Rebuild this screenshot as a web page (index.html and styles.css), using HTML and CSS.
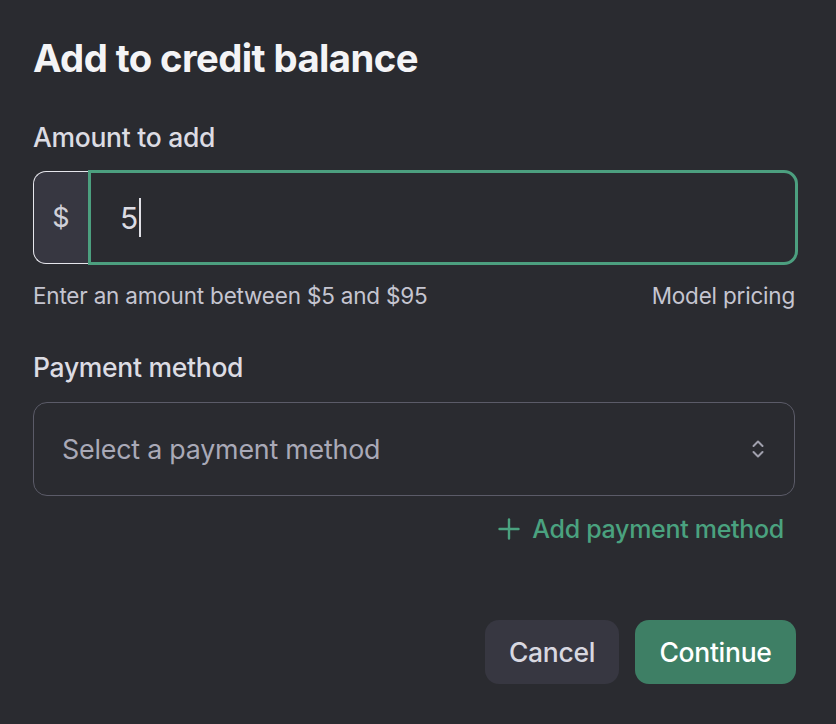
FILE: index.html
```html
<!DOCTYPE html>
<html>
<head>
<meta charset="utf-8">
<link rel="stylesheet" href="styles.css">
</head>
<body>
<div class="dialog">
  <h1 class="title">Add to credit balance</h1>
  <div class="label">Amount to add</div>
  <div class="amount-group">
    <div class="prefix">$</div>
    <div class="amount-input"><span class="value">5</span><span class="caret"></span></div>
  </div>
  <div class="helper-row">
    <span>Enter an amount between $5 and $95</span>
    <span>Model pricing</span>
  </div>
  <div class="label label-payment">Payment method</div>
  <div class="select">
    <span class="placeholder">Select a payment method</span>
    <svg class="chevrons" width="14" height="20" viewBox="0 0 14 20" fill="none" stroke="currentColor" stroke-width="2" stroke-linecap="round" stroke-linejoin="round">
      <path d="M2.5 7 L7 2.5 L11.5 7"/>
      <path d="M2.5 13 L7 17.5 L11.5 13"/>
    </svg>
  </div>
  <div class="add-row">
    <span class="add-link">
      <svg class="plus" width="22" height="22" viewBox="0 0 22 22" fill="none" stroke="currentColor" stroke-width="2.4" stroke-linecap="round">
        <path d="M11 1.5 V20.5"/>
        <path d="M1.5 11 H20.5"/>
      </svg>
      Add payment method
    </span>
  </div>
  <div class="actions">
    <button class="btn btn-cancel">Cancel</button>
    <button class="btn btn-continue">Continue</button>
  </div>
</div>
</body>
</html>
```
FILE: styles.css
```css
html, body {
  margin: 0;
  padding: 0;
  background: #2a2b30;
}
body {
  font-family: Inter, "Noto Sans", sans-serif;
  color: #ececf1;
  width: 836px;
  height: 724px;
  overflow: hidden;
}
.dialog {
  padding: 35px 38px 0 33px;
}
.title {
  margin: 0;
  font-size: 38.3px;
  line-height: 46px;
  font-weight: 700;
  letter-spacing: -0.6px;
  color: #f4f4f6;
}
.label {
  margin-top: 40px;
  font-size: 26.5px;
  line-height: 32px;
  font-weight: 500;
  letter-spacing: -0.3px;
  color: #dcdce3;
}
.label-payment {
  margin-top: 41px;
}
.amount-group {
  margin-top: 17px;
  display: flex;
  height: 95px;
}
.prefix {
  width: 55px;
  box-sizing: border-box;
  margin: 1px 0;
  border: 1.5px solid #e6e6ec;
  border-right: none;
  border-radius: 13px 0 0 13px;
  background: #373741;
  display: flex;
  align-items: center;
  justify-content: center;
  font-size: 27px;
  color: #d0d0d8;
}
.amount-input {
  flex: 1;
  box-sizing: border-box;
  border: 3.5px solid #4c9f7f;
  border-radius: 0 14px 14px 0;
  display: flex;
  align-items: center;
  padding-left: 29px;
}
.value {
  font-size: 30px;
  color: #dcdce3;
}
.caret {
  display: inline-block;
  width: 2px;
  height: 39px;
  background: #e0e0e6;
  margin-left: 1px;
}
.helper-row {
  margin-top: 17px;
  margin-right: 3px;
  display: flex;
  justify-content: space-between;
  font-size: 22.5px;
  line-height: 28px;
  color: #c5c5d0;
  letter-spacing: -0.2px;
}
.select {
  margin-top: 19px;
  margin-right: 3px;
  height: 94px;
  box-sizing: border-box;
  border: 1.5px solid #5b5b68;
  border-radius: 14px;
  display: flex;
  align-items: center;
  justify-content: space-between;
  padding: 0 29px 0 28px;
}
.placeholder {
  font-size: 26.8px;
  color: #a9a9b7;
  letter-spacing: -0.2px;
}
.chevrons {
  color: #a0a0ad;
}
.add-row {
  margin-top: 18px;
  display: flex;
  justify-content: flex-end;
  padding-right: 14px;
}
.add-link {
  display: flex;
  align-items: center;
  gap: 12px;
  font-size: 25px;
  line-height: 30px;
  font-weight: 500;
  letter-spacing: -0.3px;
  color: #4aa27f;
}
.actions {
  margin-top: 76px;
  display: flex;
  justify-content: flex-end;
  gap: 16px;
  margin-right: 2px;
}
.btn {
  font-family: Inter, "Noto Sans", sans-serif;
  border: none;
  height: 64px;
  border-radius: 14px;
  font-size: 26.5px;
  font-weight: 500;
  letter-spacing: -0.3px;
  padding: 0;
}
.btn-cancel {
  background: #373741;
  color: #d8d8e0;
  width: 134px;
}
.btn-continue {
  background: #3e7f65;
  color: #ffffff;
  width: 161px;
}
```
